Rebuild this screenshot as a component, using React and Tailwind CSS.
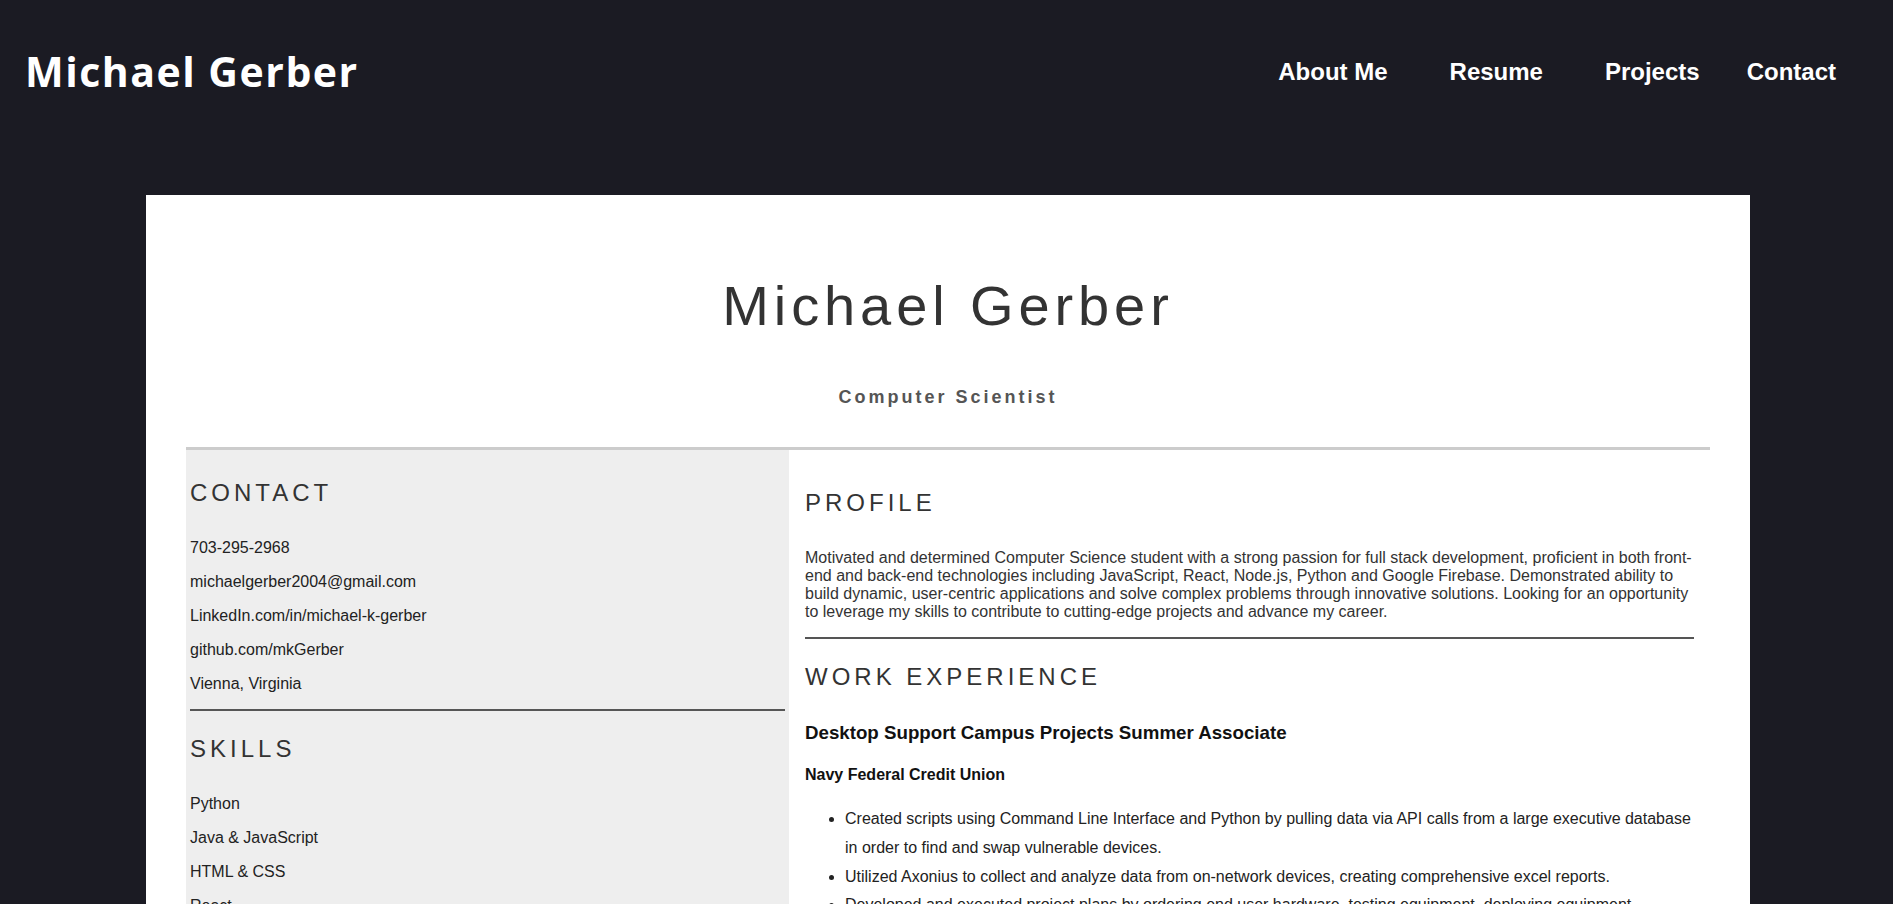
const contact = [
  '703-295-2968',
  'michaelgerber2004@gmail.com',
  'LinkedIn.com/in/michael-k-gerber',
  'github.com/mkGerber',
  'Vienna, Virginia',
];

const skills = ['Python', 'Java & JavaScript', 'HTML & CSS', 'React', 'Node.js', 'Google Firebase', 'SQL', 'Git & GitHub'];

const bullets = [
  'Created scripts using Command Line Interface and Python by pulling data via API calls from a large executive database in order to find and swap vulnerable devices.',
  'Utilized Axonius to collect and analyze data from on-network devices, creating comprehensive excel reports.',
  'Developed and executed project plans by ordering end user hardware, testing equipment, deploying equipment decommissioning outdated hardware and tracking inventory.',
];

function SectionTitle({ children, className = '' }) {
  return (
    <h2 className={`text-[24px] leading-[28px] font-normal tracking-[4px] text-[#333] ${className}`}>{children}</h2>
  );
}

export default function App() {
  return (
    <div className="min-h-screen bg-[#1b1b23] font-['Liberation_Sans',Arial,sans-serif] pb-10">
      {/* top bar */}
      <header className="h-[144px] flex items-center justify-between pl-[25px] pr-[57px]">
        <h1 className="font-['Open_Sans',sans-serif] text-[41px] font-bold tracking-[1.5px] text-white leading-normal">
          Michael Gerber
        </h1>
        <nav className="flex items-center text-[24px] font-bold text-white leading-[28px]">
          <a href="#about">About Me</a>
          <a href="#resume" className="ml-[62px]">Resume</a>
          <a href="#projects" className="ml-[62px]">Projects</a>
          <a href="#contact" className="ml-[47px]">Contact</a>
        </nav>
      </header>

      {/* resume sheet */}
      <main className="mt-[51px] ml-[146px] w-[1604px] bg-white px-[40px] pb-10">
        <div className="pt-[79px] text-center">
          <div className="text-[56px] leading-[64px] tracking-[4.9px] text-[#333]">Michael Gerber</div>
          <div className="mt-[49px] text-[18px] leading-[21px] font-bold tracking-[3px] text-[#555]">
            Computer Scientist
          </div>
        </div>
        <div className="mt-[39px] h-[3px] bg-[#ccc]" />

        <div className="flex">
          <aside className="w-[603px] shrink-0 bg-[#eee] px-1 pb-10">
            <SectionTitle className="mt-[29px]">CONTACT</SectionTitle>
            <div className="mt-[32px] flex flex-col gap-4 text-[16px] leading-[18px] text-[#222]">
              {contact.map((c) => (
                <p key={c}>{c}</p>
              ))}
            </div>
            <div className="mt-[16px] h-[2px] bg-[#555]" />
            <SectionTitle className="mt-[24px]">SKILLS</SectionTitle>
            <div className="mt-[32px] flex flex-col gap-4 text-[16px] leading-[18px] text-[#222]">
              {skills.map((s) => (
                <p key={s}>{s}</p>
              ))}
            </div>
          </aside>

          <section className="flex-1 px-4 pb-10">
            <SectionTitle className="mt-[39px]">PROFILE</SectionTitle>
            <p className="mt-[32px] text-[16px] leading-[18px] text-[#333]">
              Motivated and determined Computer Science student with a strong passion for full stack development,
              proficient in both front-end and back-end technologies including JavaScript, React, Node.js, Python and
              Google Firebase. Demonstrated ability to build dynamic, user-centric applications and solve complex
              problems through innovative solutions. Looking for an opportunity to leverage my skills to contribute to
              cutting-edge projects and advance my career.
            </p>
            <div className="mt-[16px] h-[2px] bg-[#555]" />

            <SectionTitle className="mt-[24px]">WORK EXPERIENCE</SectionTitle>
            <h3 className="mt-[31px] text-[18.72px] leading-[22px] font-bold text-[#111]">
              Desktop Support Campus Projects Summer Associate
            </h3>
            <h4 className="mt-[22px] text-[16px] leading-[18px] font-bold text-[#111]">Navy Federal Credit Union</h4>
            <ul className="mt-[21px] list-disc pl-10 text-[16px] leading-[1.8] text-[#222]">
              {bullets.map((b) => (
                <li key={b}>{b}</li>
              ))}
            </ul>
          </section>
        </div>
      </main>
    </div>
  );
}
